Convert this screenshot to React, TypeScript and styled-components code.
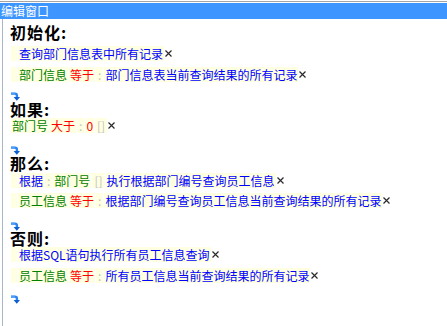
import React from 'react';
import styled, { createGlobalStyle } from 'styled-components';

const Global = createGlobalStyle`
  html, body { margin: 0; padding: 0; background: #ffffff; }
  body { font-family: "Noto Sans CJK SC", "Noto Sans", sans-serif; font-size: 12px; }
`;

const Window = styled.div`
  width: 447px;
  height: 326px;
  box-sizing: border-box;
  padding-top: 1px;
  display: flex;
  flex-direction: column;
  overflow: hidden;
  background: #ffffff;
`;

const TopLine = styled.div`
  height: 1px;
  background: #a4a4a4;
  margin-bottom: 1px;
`;

const TitleBar = styled.div`
  height: 16px;
  background: #3d95ff;
  color: #ffffff;
  font-size: 12px;
  line-height: 16px;
  padding-left: 1px;
  white-space: nowrap;
`;

const Body = styled.div`
  flex: 1;
  margin-left: 2px;
  border-left: 1px solid #a9b7c9;
  padding-left: 8px;
  display: flex;
  flex-direction: column;
  align-items: flex-start;
`;

const Heading = styled.div<{ $mt: number }>`
  margin-top: ${p => p.$mt}px;
  margin-left: -1px;
  height: 18px;
  line-height: 18px;
  font-size: 16px;
  font-weight: 700;
  letter-spacing: 1px;
  color: #000000;
  white-space: nowrap;
`;

const Row = styled.div<{ $mt: number }>`
  margin-top: ${p => p.$mt}px;
  height: 15px;
  display: flex;
  align-items: stretch;
  line-height: 15px;
  white-space: nowrap;
`;

const Spacer = styled.span`
  width: 6px;
  margin-right: 1px;
  background: #ffffe1;
`;

type Tone = 'blue' | 'green' | 'red' | 'gray';
const toneColor: Record<Tone, string> = {
  blue: '#0000ff',
  green: '#008000',
  red: '#ff0000',
  gray: '#c4c4c4',
};

const Chip = styled.span<{ $tone: Tone }>`
  background: #ffffe1;
  color: ${p => toneColor[p.$tone]};
  padding: 0 ${p => (p.$tone === 'gray' ? 2 : 1)}px;
  margin-right: 1px;
  &:last-of-type { margin-right: 0; }
`;

const CloseBox = styled.span`
  display: flex;
  align-items: center;
  width: 8px;
`;

const ArrowBox = styled.div<{ $mt: number }>`
  margin-top: ${p => p.$mt}px;
  height: 9px;
  width: 9px;
`;

const Close = () => (
  <CloseBox>
    <svg width="7" height="7" viewBox="0 0 7 7">
      <path d="M0.5 0.5 L6.5 6.5 M6.5 0.5 L0.5 6.5" stroke="#2a2a2a" strokeWidth="1.2" fill="none" />
    </svg>
  </CloseBox>
);

const Arrow = ({ mt }: { mt: number }) => (
  <ArrowBox $mt={mt}>
    <svg width="9" height="9" viewBox="0 0 9 9">
      <path d="M0 1.6 H4 Q5.9 1.6 5.9 3.6 V5.2" stroke="#2b84f0" strokeWidth="2.4" fill="none" />
      <path d="M0 1 H4" stroke="#6cb6ff" strokeWidth="1" fill="none" />
      <path d="M2.6 5 H9 L5.8 8.8 Z" fill="#0d5fd2" />
    </svg>
  </ArrowBox>
);

type Part = { t: string; tone: Tone };

const Line = ({ mt, spacer, parts }: { mt: number; spacer?: boolean; parts: Part[] }) => (
  <Row $mt={mt}>
    {spacer && <Spacer />}
    {parts.map((p, i) => (
      <Chip key={i} $tone={p.tone}>{p.t}</Chip>
    ))}
    <Close />
  </Row>
);

export default function App() {
  return (
    <>
      <Global />
      <Window>
        <TopLine />
        <TitleBar>编辑窗口</TitleBar>
        <Body>
          <Heading $mt={4}>初始化:</Heading>
          <Line mt={5} spacer parts={[{ t: '查询部门信息表中所有记录', tone: 'blue' }]} />
          <Line
            mt={6}
            spacer
            parts={[
              { t: '部门信息', tone: 'green' },
              { t: '等于', tone: 'red' },
              { t: ':', tone: 'gray' },
              { t: '部门信息表当前查询结果的所有记录', tone: 'blue' },
            ]}
          />
          <Arrow mt={5} />
          <Heading $mt={4}>如果:</Heading>
          <Line
            mt={0}
            parts={[
              { t: '部门号', tone: 'green' },
              { t: '大于', tone: 'red' },
              { t: ':', tone: 'gray' },
              { t: '0', tone: 'red' },
              { t: '[]', tone: 'gray' },
            ]}
          />
          <Arrow mt={8} />
          <Heading $mt={4}>那么:</Heading>
          <Line
            mt={1}
            spacer
            parts={[
              { t: '根据', tone: 'blue' },
              { t: ':', tone: 'gray' },
              { t: '部门号', tone: 'green' },
              { t: '[]', tone: 'gray' },
              { t: '执行根据部门编号查询员工信息', tone: 'blue' },
            ]}
          />
          <Line
            mt={5}
            spacer
            parts={[
              { t: '员工信息', tone: 'green' },
              { t: '等于', tone: 'red' },
              { t: ':', tone: 'gray' },
              { t: '根据部门编号查询员工信息当前查询结果的所有记录', tone: 'blue' },
            ]}
          />
          <Arrow mt={9} />
          <Heading $mt={3}>否则:</Heading>
          <Line mt={0} spacer parts={[{ t: '根据SQL语句执行所有员工信息查询', tone: 'blue' }]} />
          <Line
            mt={6}
            spacer
            parts={[
              { t: '员工信息', tone: 'green' },
              { t: '等于', tone: 'red' },
              { t: ':', tone: 'gray' },
              { t: '所有员工信息当前查询结果的所有记录', tone: 'blue' },
            ]}
          />
          <Arrow mt={7} />
        </Body>
      </Window>
    </>
  );
}
